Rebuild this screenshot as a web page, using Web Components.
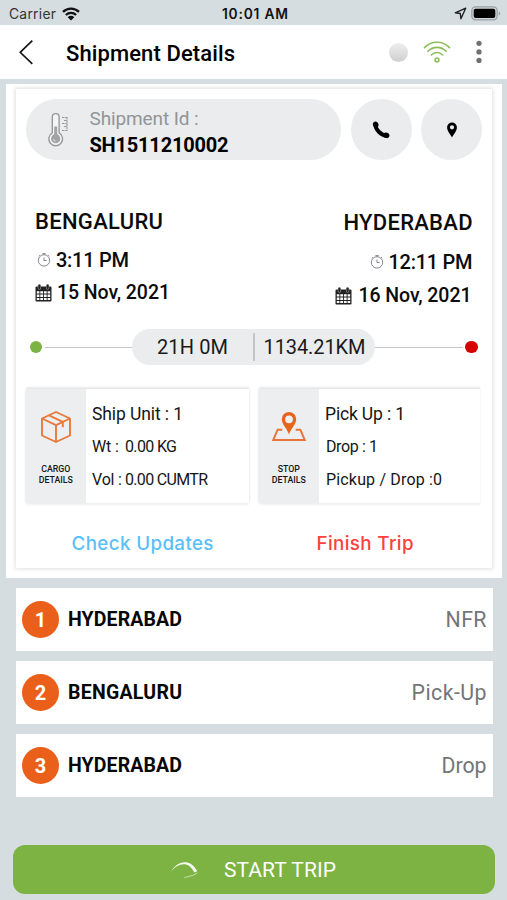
<!DOCTYPE html>
<html lang="en">
<head>
<meta charset="utf-8">
<title>Shipment Details</title>
<style>
  html, body { margin: 0; padding: 0; }
  body { width: 507px; height: 900px; overflow: hidden; background: #d5dde0; font-family: Roboto, "Liberation Sans", sans-serif; color: #111; }
</style>
</head>
<body>
<shipment-app></shipment-app>

<script>
const define = (name, css, html, after) => {
  const tpl = document.createElement('template');
  tpl.innerHTML = `<style>${css}</style>${html}`;
  customElements.define(name, class extends HTMLElement {
    connectedCallback() {
      if (this.shadowRoot) return;
      this.attachShadow({ mode: 'open' }).appendChild(tpl.content.cloneNode(true));
      if (after) after(this, this.shadowRoot);
    }
  });
};

/* One line of text; attributes: size, weight, w (line width, reached by tracking), lh */
define('text-line',
  `:host{display:block;white-space:nowrap;flex:none} span{display:inline-block;vertical-align:top}`,
  `<span><slot></slot></span>`,
  (el, root) => {
    const s = el.style, a = n => el.getAttribute(n);
    s.fontSize = a('size') + 'px';
    s.fontWeight = a('weight') || 400;
    s.lineHeight = (a('lh') || 24) + 'px';
    s.height = s.lineHeight;
    if (a('w')) {
      const natural = root.querySelector('span').getBoundingClientRect().width;
      s.letterSpacing = ((+a('w') - natural) / (el.textContent.length - 1)).toFixed(3) + 'px';
      s.width = a('w') + 'px';
    }
  });

define('icon-clock', `:host{display:block;flex:none;width:14px;height:16px} svg{display:block}`,
  `<svg width="14" height="16" viewBox="0 0 14 16" fill="none" stroke="#858591" stroke-width="1">
    <circle cx="7" cy="8.4" r="5.7"/><path d="M5.4 1.6h3.2M7 1.6v1M11.2 3.2l1 1M2.8 3.2l-1 1M7 5.6v2.9h2.6"/></svg>`);

define('icon-calendar', `:host{display:block;flex:none;width:17px;height:18px} svg{display:block}`,
  `<svg width="17" height="18" viewBox="0 0 17 18">
    <path d="M1.5 2.500h14a1 1 0 0 1 1 1v13a1 1 0 0 1-1 1h-14a1 1 0 0 1-1-1v-13a1 1 0 0 1 1-1z" fill="#222"/>
    <path d="M1.800 7.300h2.600v2.300H1.800zM5.300 7.300h2.800v2.300H5.300zM9 7.300h2.700v2.300H9zM12.600 7.300h2.600v2.300h-2.600zM1.800 10.500h2.600V13H1.800zM5.300 10.500h2.800V13H5.300zM9 10.500h2.700V13H9zM12.600 10.500h2.600V13h-2.600zM1.800 13.900h2.600v2.200H1.800zM5.300 13.900h2.800v2.200H5.300zM9 13.900h2.700v2.200H9zM12.600 13.900h2.600v2.200h-2.600z" fill="#fff"/>
    <path d="M4.400 1.600v2.400M12.600 1.600v2.400" stroke="#bbb" stroke-width="3.200" stroke-linecap="round"/>
    <path d="M4.400 1.700v2.400M12.600 1.700v2.400" stroke="#222" stroke-width="2.300" stroke-linecap="round"/></svg>`);

define('status-bar',
  `:host{display:grid;grid-template-columns:1fr auto 1fr;align-items:center;height:25px;padding:2px 6px 0 9px;box-sizing:border-box;font-family:Inter,Roboto,sans-serif}
   .l,.r{display:flex;align-items:center} .l{gap:6px;color:#333} .r{justify-content:flex-end;gap:4px}`,
  `<div class="l"><text-line size="13.800" w="47" lh="20">Carrier</text-line>
    <svg width="18" height="14" viewBox="0 0 18 14"><g fill="none" stroke="#111" stroke-width="2.300"><path d="M1 4.900a11.500 11.500 0 0 1 16 0M3.900 8a7.300 7.300 0 0 1 10.200 0"/></g><path d="M5.700 10.200a4.700 4.700 0 0 1 6.600 0L9 13.500z" fill="#111"/></svg></div>
   <text-line size="13.800" weight="600" w="66" lh="20">10:01 AM</text-line>
   <div class="r"><svg width="13" height="13" viewBox="0 0 13 13"><path d="M11.700 1.200L1.300 5.800l5 .7.600 5.200z" fill="none" stroke="#222" stroke-width="1.400" stroke-linejoin="round"/></svg>
    <svg width="30" height="15" viewBox="0 0 30 15"><rect x=".8" y=".9" width="25.400" height="12.900" rx="3.800" fill="#cfd4d6" stroke="#9ba1a4" stroke-width="1.300"/><rect x="2.700" y="2.700" width="21.600" height="9.300" rx="2" fill="#000"/><path d="M27.800 5.200c2 .8 2 3.500 0 4.300z" fill="#9ba1a4"/></svg></div>`);

define('nav-bar',
  `:host{display:flex;align-items:center;height:54px;background:#fff;padding:0 25px 0 18px;box-sizing:border-box;color:#000}
   .back{margin-right:32px} .dot{width:19px;height:19px;border-radius:50%;margin-left:auto;background:linear-gradient(#eee,#ddd 55%,#cfcfcf)}
   .wifi{margin:0 25px 0 15px} svg{display:block} text-line{padding-top:3px}`,
  `<svg class="back" width="16" height="26" viewBox="0 0 16 26"><path d="M14.300 1.600L2.200 13.300l12.100 11.500" fill="none" stroke="#111" stroke-width="1.600"/></svg>
   <text-line size="22" weight="500" w="169" lh="28">Shipment Details</text-line>
   <div class="dot"></div>
   <svg class="wifi" width="28" height="24" viewBox="0 0 28 24" fill="none" stroke="#8cbd58" stroke-width="1.600" stroke-linecap="round"><path d="M1.500 7.600C8 .4 20 .4 26.500 7.600M4.900 11.300c5-5.300 13.200-5.300 18.200 0M8.300 15c3.200-3.300 8.200-3.300 11.400 0"/><circle cx="14" cy="19.900" r="1.900"/></svg>
   <svg width="6" height="24" viewBox="0 0 6 24" fill="#707070"><circle cx="3" cy="3.300" r="2.600"/><circle cx="3" cy="11.900" r="2.600"/><circle cx="3" cy="20.400" r="2.600"/></svg>`);

define('shipment-head',
  `:host{display:flex} .pill,.c{background:#eaecee;border-radius:31px;height:61px}
   .pill{display:flex;width:315px;margin-right:10px;box-sizing:border-box;padding:8px 0 0 21px}
   .pill svg{margin:5px 21px 0 0} .t{display:flex;flex-direction:column;gap:2px}
   .t :first-child{color:#929496} .t :last-child{color:#000}
   .c{width:61px;display:flex;align-items:center;justify-content:center} .c+.c{margin-left:9.500px}`,
  `<div class="pill"><svg width="22" height="36" viewBox="0 0 22 36" fill="none" stroke="#97999b"><path d="M5.300 20.800V5a3.400 3.400 0 0 1 6.800 0v15.800a6.900 6.900 0 1 1-6.800 0z" stroke-width="1.400" fill="#f4f5f6"/><circle cx="8.700" cy="26.700" r="4.600" fill="#a1a3a5" stroke="none"/><path d="M8.700 14.500v12" stroke="#a1a3a5" stroke-width="3"/><path d="M6.600 27.200a2.300 2.300 0 0 0 2 2" stroke="#eee"/><path d="M15 5.500h5M17 8.500h3M15 11.500h5M17 14.500h3M15 18.500h5M20 5v14" stroke-width="1.100" stroke-dasharray="2.500 .7"/></svg>
     <div class="t"><text-line size="19" w="109">Shipment Id :</text-line><text-line size="20" weight="700" w="139">SH1511210002</text-line></div></div>
   <div class="c"><svg width="18" height="18" viewBox="0 0 18 18"><path d="M3.200 3.200C3.800 9 9 14.400 14.800 14.800" fill="none" stroke="#000" stroke-width="4" /><ellipse cx="3.700" cy="3.600" rx="2.700" ry="3.200" transform="rotate(-22 3.700 3.600)"/><ellipse cx="14.200" cy="14.300" rx="3.300" ry="2.700" transform="rotate(22 14.200 14.300)"/></svg></div>
   <div class="c"><svg width="12" height="16" viewBox="0 0 12 16"><path fill-rule="evenodd" d="M6 .5a4.900 4.900 0 0 1 4.900 5C10.900 9.200 7 13 6 15.500 5 13 1.100 9.200 1.100 5.500A4.900 4.900 0 0 1 6 .5zm0 2.700a2.100 2.100 0 1 0 0 4.200 2.100 2.100 0 0 0 0-4.200z"/></svg></div>`);

define('route-ends',
  `:host{display:flex;justify-content:space-between;align-items:flex-start;color:#0c0c0c}
   .col{display:flex;flex-direction:column} .row{display:flex;align-items:center;height:24px}
   .to{align-items:flex-end;padding-top:1.200px}
   .from .time{margin-top:13.200px;padding-left:2px;gap:5px} .from .date{margin-top:8.900px;gap:5px}
   .to .time{margin-top:14.600px;gap:5px} .to .date{margin-top:9.800px;gap:7px;padding-right:1px}`,
  `<div class="col from"><text-line size="22" weight="500" w="128" lh="26">BENGALURU</text-line>
     <div class="row time"><icon-clock></icon-clock><text-line size="20" weight="500" w="73">3:11 PM</text-line></div>
     <div class="row date"><icon-calendar></icon-calendar><text-line size="19.500" weight="500" w="113">15 Nov, 2021</text-line></div></div>
   <div class="col to"><text-line size="22" weight="500" w="129" lh="26">HYDERABAD</text-line>
     <div class="row time"><icon-clock></icon-clock><text-line size="20" weight="500" w="84">12:11 PM</text-line></div>
     <div class="row date"><icon-calendar></icon-calendar><text-line size="19.500" weight="500" w="113">16 Nov, 2021</text-line></div></div>`);

define('trip-track',
  `:host{display:flex;align-items:center;height:36px}
   i{width:12.500px;height:12.500px;border-radius:50%;flex:none} .g{background:#7cb342}.e{background:#d50000}
   b{height:1px;background:#c4c6c8;flex:1} .g+b{margin-left:2.500px} .p+b{margin-right:2.500px}
   .p{display:flex;align-items:center;width:243px;height:36px;border-radius:18px;background:#eaecee;color:#1a1a1a;box-sizing:border-box;padding-left:25px}
   .s{width:1.500px;height:28px;background:#c3c5c7;margin:0 9px 0 25px}`,
  `<i class="g"></i><b></b><div class="p"><text-line size="20" w="71">21H 0M</text-line><span class="s"></span><text-line size="20" w="102">1134.21KM</text-line></div><b></b><i class="e"></i>`);

define('detail-card',
  `:host{display:flex;height:114px;color:#161616;background:#fff;box-shadow:0 -2px 2px rgba(0,0,0,.09),0 1px 3px rgba(0,0,0,.1)}
   :host([open-right]){clip-path:inset(-5px 0 -5px -5px)}
   .side{width:60.500px;background:#eceef0;display:flex;flex-direction:column;align-items:center;box-sizing:border-box;padding-top:20px;flex:none}
   .pic{height:36px;display:flex;align-items:center} .cap{margin-top:19px;display:flex;flex-direction:column;align-items:center}
   .body{display:flex;flex-direction:column;gap:9px;padding:13px 0 0 6px}`,
  `<div class="side"><div class="pic"><slot name="icon"></slot></div><div class="cap"><slot name="caption"></slot></div></div><div class="body"><slot></slot></div>`);

define('stop-row',
  `:host{display:flex;align-items:center;height:63px;background:#fff;padding:0 6px 0 6.500px}
   .n{width:37px;height:37px;border-radius:50%;background:#ea5f1a;color:#fff;display:flex;align-items:center;justify-content:center;margin-right:9px}
   .kind{margin-left:auto;color:#737577} .city{color:#080808}`,
  `<div class="n"><text-line size="20" weight="700"><slot name="num"></slot></text-line></div><div class="city"><slot name="city"></slot></div><div class="kind"><slot name="kind"></slot></div>`);

define('start-button',
  `:host{display:flex;align-items:center;height:49px;border-radius:12px;background:#7cb342;color:#fff;box-sizing:border-box;padding-left:157px;gap:25px}`,
  `<svg width="29" height="20" viewBox="0 0 29 20"><path d="M1.300 11.700C4.500 3.700 19-4.500 27.200 11.300L24.200 12.600C19 .5 7.500 2.800 1.300 11.700z" fill="#fff" fill-opacity=".92"/><path d="M27.500 12.600c-2 2.500-7 3.200-13.200 5.200" fill="none" stroke="#fff" stroke-opacity=".65" stroke-width=".9"/></svg>
   <text-line size="21" w="112" lh="28">START TRIP</text-line>`);

define('shipment-app',
  `:host{display:flex;flex-direction:column;height:900px}
   .outer{margin:5px 5px 0 6px;height:494px;background:#fff;box-sizing:border-box;padding:5px 10px 10px}
   .card{height:479px;background:#fff;box-sizing:border-box;padding:10px 9.500px 0;box-shadow:0 0 4px 1px rgba(0,0,0,.13)}
   route-ends{margin:48.500px 10px 0 9.500px} trip-track{margin:21px 5px 0 4px}
   .cards{display:grid;grid-template-columns:223px 222px;gap:10px;margin-top:24px}
   .links{display:flex;margin-top:29px;font-family:Inter,Roboto,sans-serif} .links :first-child{margin-left:46px;color:#5bc0f8} .links :last-child{margin-left:103px;color:#fb423b}
   .two{display:flex;gap:6px}
   .stops{display:flex;flex-direction:column;gap:10px;margin:10px 14.500px 0 15.500px}
   start-button{margin:48px 12.500px 0 13px}`,
  `<status-bar></status-bar><nav-bar></nav-bar>
   <div class="outer"><div class="card">
     <shipment-head></shipment-head><route-ends></route-ends><trip-track></trip-track>
     <div class="cards">
       <detail-card>
         <svg slot="icon" width="32" height="34" viewBox="0 0 32 34" fill="none" stroke="#e8793a" stroke-width="1.900" stroke-linejoin="round"><path d="M16 2l14 6.500v17L16 32 2 25.500v-17zM2 8.500l14 6.700 14-6.700M16 15.200V32M9 5.300l13.800 6.600v5.300"/></svg>
         <text-line slot="caption" size="8.800" weight="500" lh="11" w="29">CARGO</text-line><text-line slot="caption" size="8.800" weight="500" lh="11" w="34">DETAILS</text-line>
         <text-line size="17.500" w="91">Ship Unit : 1</text-line>
         <div class="two"><text-line size="16" w="27">Wt :</text-line><text-line size="16" w="52">0.00 KG</text-line></div>
         <div class="two" style="gap:3px"><text-line size="16" w="30">Vol :</text-line><text-line size="16" w="83">0.00 CUMTR</text-line></div>
       </detail-card>
       <detail-card open-right>
         <svg slot="icon" width="36" height="32" viewBox="0 0 36 32"><path fill="#e8641b" fill-rule="evenodd" d="M18 1a7.200 7.200 0 0 1 7.200 7.200c0 5-5.200 9-7.200 15.300-2-6.300-7.200-10.300-7.200-15.300A7.200 7.200 0 0 1 18 1zm0 3.400a3.900 3.900 0 1 0 0 7.800 3.900 3.900 0 0 0 0-7.800z"/><path d="M11.300 18.800H6.600L2.200 29h31.600l-4.400-10.200h-4.700" fill="none" stroke="#e8743a" stroke-width="1.900"/></svg>
         <text-line slot="caption" size="8.800" weight="500" lh="11" w="22">STOP</text-line><text-line slot="caption" size="8.800" weight="500" lh="11" w="34">DETAILS</text-line>
         <text-line size="17.500" w="80">Pick Up : 1</text-line>
         <text-line size="16" w="52" style="margin-left:1px">Drop : 1</text-line>
         <text-line size="16" w="116" style="margin-left:1px">Pickup / Drop :0</text-line>
       </detail-card>
     </div>
     <div class="links"><text-line size="18.800" weight="500" w="142">Check Updates</text-line><text-line size="18.800" weight="500" w="97">Finish Trip</text-line></div>
   </div></div>
   <div class="stops">
     <stop-row><span slot="num">1</span><text-line slot="city" size="19.500" weight="700" w="114">HYDERABAD</text-line><text-line slot="kind" size="21.300" w="41">NFR</text-line></stop-row>
     <stop-row><span slot="num">2</span><text-line slot="city" size="19.500" weight="700" w="114">BENGALURU</text-line><text-line slot="kind" size="21.300" w="75">Pick-Up</text-line></stop-row>
     <stop-row><span slot="num">3</span><text-line slot="city" size="19.500" weight="700" w="114">HYDERABAD</text-line><text-line slot="kind" size="21.300" w="45">Drop</text-line></stop-row>
   </div>
   <start-button></start-button>`);
</script>
</body>
</html>
